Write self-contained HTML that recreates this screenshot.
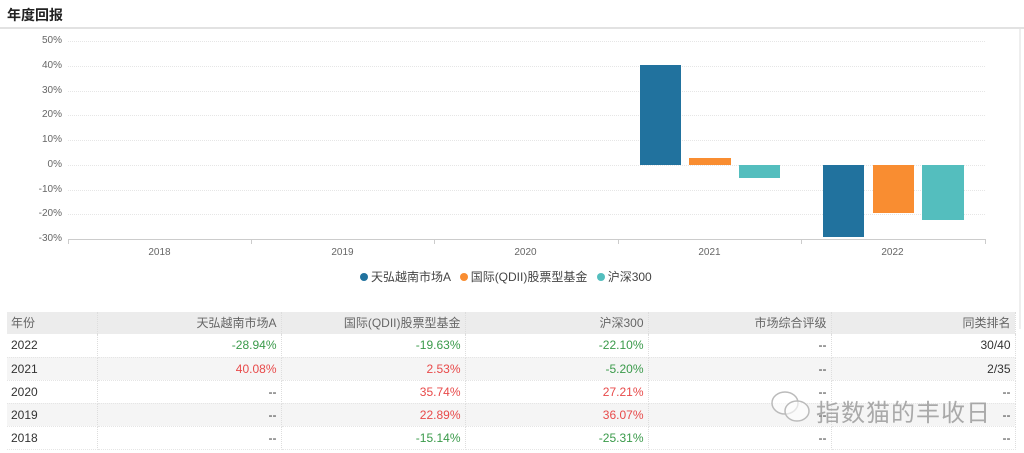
<!DOCTYPE html>
<html><head><meta charset="utf-8"><style>
body{margin:0;width:1024px;height:453px;background:#fff;font-family:"Liberation Sans","Noto Sans CJK SC",sans-serif;position:relative;overflow:hidden}
.abs{position:absolute}
.yl{position:absolute;right:962px;font-size:10px;color:#666;line-height:10px}
.gl{position:absolute;left:68px;width:917px;border-top:1px dotted #e6e6e6;height:0}
.xl{position:absolute;top:247px;font-size:10px;color:#666;width:183px;text-align:center}
.tick{position:absolute;top:239px;width:1px;height:5px;background:#ccc}
table{position:absolute;left:7px;top:312px;width:1008px;border-collapse:collapse;font-size:12px;color:#333;table-layout:fixed}
td{height:22px;line-height:22px;padding:0 4px;text-align:right;border-right:1px dotted #ddd;border-bottom:1px dotted #e5e5e5;box-sizing:border-box;white-space:nowrap}
tr{height:23px}
td:first-child{text-align:left}
tr.h{height:22px}
tr.h td{background:#ececec;color:#666;border-bottom:none}
tr.s td{background:#f5f5f5}
.g{color:#3a9a4a}.r{color:#e84a4a}
</style></head><body>
<div class="abs" style="left:7px;top:5px;font-size:14px;font-weight:bold;color:#222">年度回报</div>
<div class="abs" style="left:0;top:27px;width:1024px;height:2px;background:#e2e2e2"></div>
<div class="abs" style="left:1019px;top:29px;width:2px;height:300px;background:#eee"></div>
<div class="yl" style="top:36px">50%</div><div class="gl" style="top:41px"></div>
<div class="yl" style="top:61px">40%</div><div class="gl" style="top:66px"></div>
<div class="yl" style="top:86px">30%</div><div class="gl" style="top:91px"></div>
<div class="yl" style="top:110px">20%</div><div class="gl" style="top:115px"></div>
<div class="yl" style="top:135px">10%</div><div class="gl" style="top:140px"></div>
<div class="yl" style="top:160px">0%</div><div class="gl" style="top:165px"></div>
<div class="yl" style="top:185px">-10%</div><div class="gl" style="top:190px"></div>
<div class="yl" style="top:209px">-20%</div><div class="gl" style="top:214px"></div>
<div class="yl" style="top:234px">-30%</div>
<div class="abs" style="left:68px;top:239px;width:918px;height:1px;background:#ccc"></div>
<div class="tick" style="left:68px"></div><div class="tick" style="left:251px"></div><div class="tick" style="left:434px"></div><div class="tick" style="left:618px"></div><div class="tick" style="left:801px"></div><div class="tick" style="left:985px"></div>
<div class="xl" style="left:68px">2018</div><div class="xl" style="left:251px">2019</div><div class="xl" style="left:434px">2020</div><div class="xl" style="left:618px">2021</div><div class="xl" style="left:801px">2022</div>
<div class="abs" style="left:640px;top:65px;width:41px;height:100px;background:#21729e"></div>
<div class="abs" style="left:689px;top:158px;width:42px;height:7px;background:#f98d31"></div>
<div class="abs" style="left:739px;top:165px;width:41px;height:13px;background:#54bebe"></div>
<div class="abs" style="left:823px;top:165px;width:41px;height:72px;background:#21729e"></div>
<div class="abs" style="left:873px;top:165px;width:41px;height:48px;background:#f98d31"></div>
<div class="abs" style="left:922px;top:165px;width:42px;height:55px;background:#54bebe"></div>
<div class="abs" style="left:360px;top:270px;font-size:12px;color:#444;white-space:nowrap;line-height:14px">
<span style="display:inline-block;width:8px;height:8px;border-radius:50%;background:#21729e;margin-right:3px"></span>天弘越南市场A
<span style="display:inline-block;width:8px;height:8px;border-radius:50%;background:#f98d31;margin:0 3px 0 6px"></span>国际(QDII)股票型基金
<span style="display:inline-block;width:8px;height:8px;border-radius:50%;background:#54bebe;margin:0 3px 0 6px"></span>沪深300
</div>
<table>
<colgroup><col style="width:90px"><col style="width:184px"><col style="width:184px"><col style="width:183px"><col style="width:183px"><col style="width:184px"></colgroup>
<tr class="h"><td>年份</td><td>天弘越南市场A</td><td>国际(QDII)股票型基金</td><td>沪深300</td><td>市场综合评级</td><td>同类排名</td></tr>
<tr><td>2022</td><td class="g">-28.94%</td><td class="g">-19.63%</td><td class="g">-22.10%</td><td>--</td><td>30/40</td></tr>
<tr class="s"><td>2021</td><td class="r">40.08%</td><td class="r">2.53%</td><td class="g">-5.20%</td><td>--</td><td>2/35</td></tr>
<tr><td>2020</td><td>--</td><td class="r">35.74%</td><td class="r">27.21%</td><td>--</td><td>--</td></tr>
<tr class="s"><td>2019</td><td>--</td><td class="r">22.89%</td><td class="r">36.07%</td><td>--</td><td>--</td></tr>
<tr><td>2018</td><td>--</td><td class="g">-15.14%</td><td class="g">-25.31%</td><td>--</td><td>--</td></tr>
</table>
<svg class="abs" style="left:770px;top:390px" width="44" height="34" viewBox="0 0 44 34"><ellipse cx="15" cy="13" rx="13" ry="11" fill="rgba(255,255,255,0.6)" stroke="#bbb" stroke-width="1.5"/><ellipse cx="27" cy="21" rx="12" ry="10" fill="rgba(255,255,255,0.6)" stroke="#bbb" stroke-width="1.5"/></svg>
<div class="abs" style="left:816px;top:393px;font-size:24px;color:rgba(150,150,150,0.8);letter-spacing:1px;white-space:nowrap">指数猫的丰收日</div>
</body></html>
